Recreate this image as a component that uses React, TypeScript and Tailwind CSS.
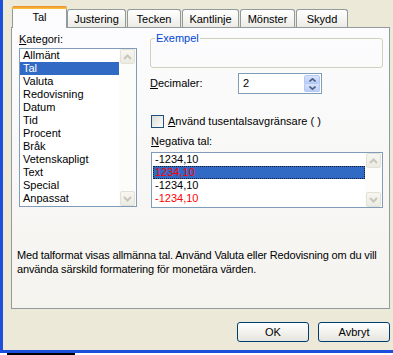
import React from "react";

const categories = [
  "Allmänt",
  "Tal",
  "Valuta",
  "Redovisning",
  "Datum",
  "Tid",
  "Procent",
  "Bråk",
  "Vetenskapligt",
  "Text",
  "Special",
  "Anpassat",
];

function ScrollArrow({ up }: { up: boolean }) {
  return (
    <div className="w-[15px] h-[15px] rounded-[2px] border border-[#E3E1D6] bg-gradient-to-b from-[#F7F6F1] to-[#ECEBE3] flex items-center justify-center">
      <svg width="9" height="6" viewBox="0 0 9 6">
        {up ? (
          <path d="M1 5 L4.5 1.5 L8 5" fill="none" stroke="#C9C7BA" strokeWidth="2" />
        ) : (
          <path d="M1 1 L4.5 4.5 L8 1" fill="none" stroke="#C9C7BA" strokeWidth="2" />
        )}
      </svg>
    </div>
  );
}

function Scrollbar() {
  return (
    <div className="w-[17px] flex flex-col justify-between items-center bg-[#FCFCFB]">
      <ScrollArrow up />
      <ScrollArrow up={false} />
    </div>
  );
}

function Tab({ label, w, ml }: { label: string; w: string; ml: string }) {
  return (
    <div
      className={`${w} ${ml} h-[18px] border border-b-0 border-[#919B9C] rounded-t-[3px] bg-gradient-to-b from-[#FFFFFF] to-[#ECEBE6] flex items-center justify-center pt-[1px]`}
    >
      {label}
    </div>
  );
}

export default function App() {
  return (
    <div className="w-[393px] h-[355px] overflow-hidden bg-[#ECE9D8] font-['Liberation_Sans',Arial,sans-serif] text-[11px] leading-[13px] text-black flex flex-col">
      <div className="h-[350px] flex border-l-[3px] border-[#1D4FDD]">
        <div className="flex-1 flex flex-col pl-[8px] pt-[6px]">
          {/* Tabs */}
          <div className="h-[21px] flex items-end pl-[1px]">
            <div className="relative z-10 w-[55px] h-[22px] -mb-px border border-b-0 border-[#919B9C] rounded-t-[3px] bg-[#FCFCFE] flex flex-col">
              <div className="h-[3px] -mx-px -mt-px rounded-t-[3px] bg-gradient-to-b from-[#E68B2C] to-[#FFC73C]" />
              <div className="flex-1 flex items-center justify-center pb-[2px]">Tal</div>
            </div>
            <Tab label="Justering" w="w-[59px]" ml="ml-0" />
            <Tab label="Tecken" w="w-[54px]" ml="ml-[1px]" />
            <Tab label="Kantlinje" w="w-[57px]" ml="ml-[1px]" />
            <Tab label="Mönster" w="w-[55px]" ml="ml-[1px]" />
            <Tab label="Skydd" w="w-[52px]" ml="ml-[1px]" />
          </div>

          {/* Panel */}
          <div className="w-[379px] h-[282px] border border-[#919B9C] bg-gradient-to-b from-[#FCFCFE] to-[#F4F3EE] flex flex-col">
            <div className="flex pl-[7px]">
              {/* Left column */}
              <div className="w-[118px] flex flex-col pt-[5px]">
                <div>
                  <span className="underline">K</span>ategori:
                </div>
                <div className="mt-[2px] h-[159px] border border-[#7F9DB9] bg-white flex">
                  <div className="flex-1">
                    {categories.map((c) => (
                      <div
                        key={c}
                        className={`h-[13px] pl-[3px] flex items-center ${
                          c === "Tal" ? "bg-[#316AC5] text-white" : ""
                        }`}
                      >
                        {c}
                      </div>
                    ))}
                  </div>
                  <Scrollbar />
                </div>
              </div>

              {/* Right column */}
              <div className="ml-[13px] w-[233px] flex flex-col">
                <fieldset className="mt-[4px] h-[36px] border border-[#D0D0BF] rounded-[3px]">
                  <legend className="ml-[4px] px-[1px] text-[#0046D5] leading-[13px]">Exempel</legend>
                </fieldset>

                <div className="mt-[5px] h-[21px] flex items-center">
                  <div className="w-[88px]">
                    <span className="underline">D</span>ecimaler:
                  </div>
                  <div className="w-[84px] h-[21px] border border-[#7F9DB9] bg-white flex items-center">
                    <div className="flex-1 pl-[4px]">2</div>
                    <div className="w-[16px] h-[17px] mr-[1px] flex flex-col">
                      <div className="flex-1 rounded-t-[2px] border border-[#B4C8F6] bg-gradient-to-b from-[#D9E3FB] to-[#BBCDF5] flex items-center justify-center">
                        <svg width="7" height="4" viewBox="0 0 7 4">
                          <path d="M0.5 3.5 L3.5 0.8 L6.5 3.5" fill="none" stroke="#4D6185" strokeWidth="1.6" />
                        </svg>
                      </div>
                      <div className="flex-1 rounded-b-[2px] border border-t-0 border-[#B4C8F6] bg-gradient-to-b from-[#D9E3FB] to-[#BBCDF5] flex items-center justify-center">
                        <svg width="7" height="4" viewBox="0 0 7 4">
                          <path d="M0.5 0.5 L3.5 3.2 L6.5 0.5" fill="none" stroke="#4D6185" strokeWidth="1.6" />
                        </svg>
                      </div>
                    </div>
                  </div>
                </div>

                <div className="mt-[21px] h-[13px] flex items-center">
                  <div className="ml-[1px] w-[13px] h-[13px] border border-[#1C5180] bg-gradient-to-br from-[#DCDBD3] to-[#FFFFFF]" />
                  <div className="ml-[4px]">
                    <span className="underline">A</span>nvänd tusentalsavgränsare ( )
                  </div>
                </div>

                <div className="mt-[7px] ml-[1px]">
                  <span className="underline">N</span>egativa tal:
                </div>

                <div className="mt-[4px] ml-[1px] w-[232px] h-[56px] border border-[#7F9DB9] bg-white flex">
                  <div className="flex-1 pl-[1px]">
                    <div className="h-[13px] pl-[2px] flex items-center">-1234,10</div>
                    <div className="h-[13px] pl-[2px] flex items-center bg-[#316AC5] text-[#FF0000] outline-1 outline-dotted outline-offset-[-1px] outline-[#1A1A2E]">
                      1234,10
                    </div>
                    <div className="h-[13px] pl-[2px] flex items-center">-1234,10</div>
                    <div className="h-[13px] pl-[2px] flex items-center text-[#FF0000]">-1234,10</div>
                  </div>
                  <Scrollbar />
                </div>
              </div>
            </div>

            <div className="mt-[40px] pl-[5px] leading-[14px] tracking-[-0.15px]">
              Med talformat visas allmänna tal. Använd Valuta eller Redovisning om du vill
              <br />
              använda särskild formatering för monetära värden.
            </div>
          </div>

          {/* Buttons */}
          <div className="mt-[13px] flex justify-end pr-[3px] gap-[9px]">
            <button className="w-[72px] h-[20px] rounded-[3px] border border-[#003C74] bg-gradient-to-b from-[#FFFFFF] to-[#E6E5DE] text-[11px]">
              OK
            </button>
            <button className="w-[72px] h-[20px] rounded-[3px] border border-[#003C74] bg-gradient-to-b from-[#FFFFFF] to-[#E6E5DE] text-[11px]">
              Avbryt
            </button>
          </div>
        </div>
      </div>
      <div className="h-[3px] bg-[#1D4FDD]" />
      <div className="h-[2px] flex bg-white">
        <div className="ml-[7px] w-[68px] bg-black" />
      </div>
    </div>
  );
}
